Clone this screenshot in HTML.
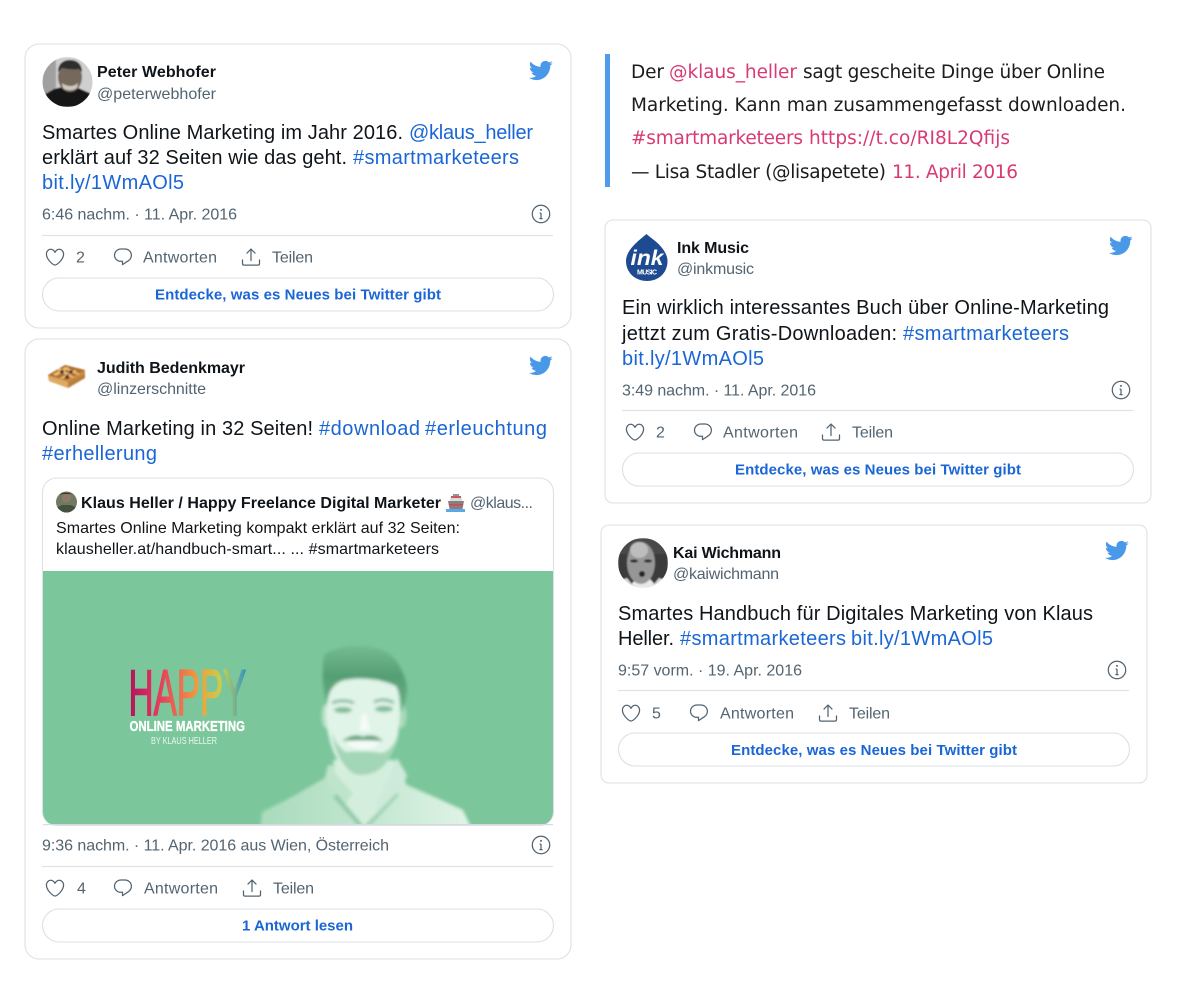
<!DOCTYPE html>
<html lang="de"><head><meta charset="utf-8"><title>Tweets</title>
<style>
html,body{margin:0;padding:0;background:#fff}
svg{display:block}
text{font-family:"Liberation Sans",sans-serif;white-space:pre}
.t{font-size:20px;fill:#0f1419}
.l{font-size:20px;fill:#1a66d6}
.n{font-size:16px;font-weight:700;fill:#0f1419}
.h{font-size:16px;fill:#536471}
.m{font-size:16px;fill:#536471}
.b{font-size:15px;font-weight:700;fill:#1a66d6}
.q{font-family:"DejaVu Sans",sans-serif;font-size:18.500px;fill:#1c1c1c}
.p{font-family:"DejaVu Sans",sans-serif;font-size:18.500px;fill:#d93a74}
.s{font-size:16px;fill:#0f1419}
.card{fill:#fff;stroke:#dbe1e6;stroke-width:1.100}
.div{stroke:#dde3e7;stroke-width:1.300}
.btn{fill:#fff;stroke:#d9e0e4;stroke-width:1.100}
.ic{fill:none;stroke:#536471;stroke-width:1.250;stroke-linejoin:round;stroke-linecap:round}
</style></head>
<body>
<svg xmlns="http://www.w3.org/2000/svg" width="1200" height="989" viewBox="0 0 1200 989">
<defs>
<symbol id="bird" viewBox="0 0 24 24"><path fill="#4a99e9" d="M23.643 4.937c-.835.37-1.732.62-2.675.733.962-.576 1.7-1.49 2.048-2.578-.9.534-1.897.922-2.958 1.13-.85-.904-2.06-1.47-3.4-1.47-2.572 0-4.658 2.086-4.658 4.66 0 .364.042.718.12 1.06-3.873-.195-7.304-2.05-9.602-4.868-.4.69-.63 1.49-.63 2.342 0 1.616.823 3.043 2.072 3.878-.764-.025-1.482-.234-2.11-.583v.06c0 2.257 1.605 4.14 3.737 4.568-.392.106-.803.162-1.227.162-.3 0-.593-.028-.877-.082.593 1.85 2.313 3.198 4.352 3.234-1.595 1.25-3.604 1.995-5.786 1.995-.376 0-.747-.022-1.112-.065 2.062 1.323 4.51 2.093 7.14 2.093 8.57 0 13.255-7.098 13.255-13.254 0-.2-.005-.402-.014-.602.91-.658 1.7-1.477 2.323-2.41z"/></symbol>
<symbol id="heart" viewBox="0 0 20 20"><path class="ic" d="M10 18C7.900 17.900 1.400 12.400 1.400 7c0-2.600 2-4.700 4.300-4.700 2 0 3.400 1.400 4.300 3 .9-1.600 2.300-3 4.300-3 2.300 0 4.300 2.100 4.300 4.700 0 5.400-6.500 10.900-8.600 11z"/></symbol>
<symbol id="reply" viewBox="0 0 20 20"><path class="ic" d="M8 2h3.900c3.600 0 6.500 2.800 6.500 6.300 0 2.700-1.500 4.600-3.700 5.900l-5.200 3.400v-3.300H8C4.400 14.300 1.500 11.600 1.500 8.200 1.500 4.800 4.400 2 8 2z"/></symbol>
<symbol id="share" viewBox="0 0 20 20"><path class="ic" d="M10 13.500V2.200M6 6.100L10 2l4 4.100M1.500 13v3.600c0 .9.700 1.500 1.500 1.500h14c.8 0 1.500-.6 1.500-1.500V13"/></symbol>
<symbol id="info" viewBox="0 0 20 20"><circle cx="10" cy="10" r="8.700" fill="none" stroke="#536471" stroke-width="1.250"/><circle cx="10" cy="5.900" r="1" fill="#536471"/><path d="M10 9v5.500M8.600 9.100H10M8.400 14.600h3.200" stroke="#536471" stroke-width="1.250" fill="none"/></symbol>
<clipPath id="ca1"><circle cx="67.500" cy="82" r="25"/></clipPath>
<clipPath id="ca2"><circle cx="643" cy="563" r="25"/></clipPath>
<clipPath id="ca3"><circle cx="66.500" cy="502" r="10.500"/></clipPath>
<clipPath id="img"><path d="M43 571H553V812a13 13 0 0 1-13 13H56a13 13 0 0 1-13-13z"/></clipPath>
<linearGradient id="rb" x1="0" x2="1" y1="0" y2="0">
<stop offset="0" stop-color="#b0125f"/><stop offset=".22" stop-color="#e2305f"/><stop offset=".42" stop-color="#ee6a50"/><stop offset=".6" stop-color="#f0a03a"/><stop offset=".8" stop-color="#c6d050"/><stop offset="1" stop-color="#2f93c4"/></linearGradient>
<linearGradient id="shirt" x1="0" x2="1" y1="0" y2="0"><stop offset="0" stop-color="#a9dbbc"/><stop offset=".55" stop-color="#c5e8d2"/><stop offset="1" stop-color="#e3f4e9"/></linearGradient>
<linearGradient id="hair" x1="0" x2="0" y1="0" y2="1"><stop offset="0" stop-color="#74bb92"/><stop offset=".45" stop-color="#569e74"/><stop offset="1" stop-color="#6bb48a"/></linearGradient>
<filter id="bl" x="-10%" y="-10%" width="120%" height="120%"><feGaussianBlur stdDeviation="1.500"/></filter>
<filter id="bs" x="-10%" y="-10%" width="120%" height="120%"><feGaussianBlur stdDeviation=".7"/></filter>
</defs>

<!-- Card 1 -->
<rect class="card" x="25" y="44" width="546" height="284" rx="14"/>
<g clip-path="url(#ca1)"><g filter="url(#bs)">
<rect x="42" y="57" width="52" height="50" fill="#cfcfcf"/>
<rect x="42" y="57" width="14" height="50" fill="#a0a0a0"/>
<path d="M42 107V96l12-7 8-2 14 0 18 8v12z" fill="#141414"/>
<ellipse cx="70" cy="77" rx="12" ry="15" fill="#75695c"/>
<path d="M58 72c0-8 5-12 12-12s12 4 12 12l-3-3c-6 1-12 0-17-1z" fill="#2e2e2e"/>
<path d="M62 83c5 4 12 4 16 0l-1 5c-4 3-11 3-14 0z" fill="#cfc8bf"/>
</g></g>
<text class="n" x="97" y="77" textLength="119">Peter Webhofer</text>
<text class="h" x="97" y="99" textLength="119">@peterwebhofer</text>
<use href="#bird" x="528" y="58" width="25" height="25"/>
<text class="t" x="42" y="139" textLength="361">Smartes Online Marketing im Jahr 2016.</text>
<text class="l" x="409" y="139" textLength="124">@klaus_heller</text>
<text class="t" x="42" y="164" textLength="305">erklärt auf 32 Seiten wie das geht.</text>
<text class="l" x="353" y="164" textLength="166">#smartmarketeers</text>
<text class="l" x="42" y="189" textLength="142">bit.ly/1WmAOl5</text>
<text class="m" x="42" y="219.500" textLength="195">6:46 nachm. · 11. Apr. 2016</text>
<use href="#info" x="531" y="204" width="20" height="20"/>
<line class="div" x1="42" x2="553" y1="235.500" y2="235.500"/>
<use href="#heart" x="45" y="247" width="20" height="20"/>
<text class="m" x="76" y="262.500">2</text>
<use href="#reply" x="113" y="247" width="20" height="20"/>
<text class="m" x="143" y="262.500" textLength="74">Antworten</text>
<use href="#share" x="241" y="247" width="20" height="20"/>
<text class="m" x="272" y="262.500" textLength="41">Teilen</text>
<rect class="btn" x="42.500" y="278" width="511" height="33" rx="16.500"/>
<text class="b" x="155" y="299.500" textLength="286">Entdecke, was es Neues bei Twitter gibt</text>

<!-- Card 2 -->
<rect class="card" x="25" y="339" width="546" height="620" rx="14"/>
<g filter="url(#bs)">
<path d="M48 375l17-10 20 5 0 8-17 10-19-7z" fill="#c98c45"/>
<path d="M48 375l17-10 20 5-18 10z" fill="#b0702f"/>
<path d="M53 374l14-7 2 1-13 8zM60 378l15-8 2 1-15 8zM57 370l15 8 2-1-14-9zM65 367l15 7-2 1-15-7z" fill="#e9bd72"/>
<circle cx="62" cy="372" r="1.800" fill="#4b2b3a"/><circle cx="71" cy="372" r="1.800" fill="#4b2b3a"/><circle cx="67" cy="377" r="1.800" fill="#4b2b3a"/>
<path d="M49 376l19 6 0 6-19-7z" fill="#dcaa65"/>
<path d="M68 382l17-8v4l-17 10z" fill="#b97f3e"/>
</g>
<text class="n" x="97" y="373" textLength="148">Judith Bedenkmayr</text>
<text class="h" x="97" y="394" textLength="109">@linzerschnitte</text>
<use href="#bird" x="528" y="353" width="25" height="25"/>
<text class="t" x="42" y="435" textLength="271">Online Marketing in 32 Seiten!</text>
<text class="l" x="319" y="435" textLength="101">#download</text>
<text class="l" x="425" y="435" textLength="122">#erleuchtung</text>
<text class="l" x="42" y="460" textLength="115">#erhellerung</text>

<rect class="card" x="42.500" y="478" width="511" height="347.500" rx="14"/>
<g clip-path="url(#ca3)"><rect x="56" y="491" width="21" height="22" fill="#6f7a60"/><circle cx="66.500" cy="498" r="4.500" fill="#8f7a68"/><path d="M56 513v-5l6-3h9l6 3v5z" fill="#46503f"/><path d="M60 495c1-3 10-3 13 0l-2-1h-9z" fill="#3c332a"/></g>
<text class="n" x="81" y="508" textLength="360">Klaus Heller / Happy Freelance Digital Marketer</text>
<g>
<rect x="453" y="494" width="6" height="2" fill="#8f98a0"/>
<rect x="451" y="496" width="10" height="2" fill="#c65a5a"/>
<rect x="450" y="498" width="12" height="3" fill="#d9dde0"/>
<path d="M448 501h16l-1.500 8h-13z" fill="#8a7f80"/>
<rect x="449" y="504" width="14" height="1.500" fill="#d8474a"/>
<rect x="446" y="509" width="19" height="3" fill="#5aa9e6"/>
</g>
<text class="h" x="470" y="508" textLength="63">@klaus...</text>
<text class="s" x="56" y="533" textLength="404">Smartes Online Marketing kompakt erklärt auf 32 Seiten:</text>
<text class="s" x="56" y="554" textLength="383">klausheller.at/handbuch-smart... ... #smartmarketeers</text>

<g clip-path="url(#img)">
<rect x="43" y="571" width="510" height="254" fill="#7bc69a"/>
<g transform="translate(128.500 715) scale(.535 1)"><text x="0" y="0" fill="url(#rb)" stroke="url(#rb)" stroke-width="1.500" style="font-size:65px">HAPPY</text></g>
<text x="129.500" y="731" style="font-size:15px;font-weight:700" fill="#fff" stroke="#fff" stroke-width=".35" textLength="115.500" lengthAdjust="spacingAndGlyphs">ONLINE MARKETING</text>
<text x="151" y="744" style="font-size:10px" fill="#eaf7ef" textLength="66" lengthAdjust="spacingAndGlyphs">BY KLAUS HELLER</text>
<g filter="url(#bl)">
<path d="M260 830l2-18 28-14 35-20 3-13 69 3 10 17 30 13 26 12 14 30z" fill="url(#shirt)"/>
<path d="M333 760h62l2 30-32 40-26-32z" fill="#d4eedd"/>
<path d="M328 765l25 28-8 12-20-27z" fill="#bfe4cc"/>
<path d="M397 758l10 17-6 18-20 22-6-8z" fill="#cdeada"/>
<path d="M337 794l26 31-4 2-26-30z" fill="#8fcba8"/>
<path d="M397 793l-32 32 4 2 30-32z" fill="#9ad2b1"/>
<ellipse cx="326" cy="716" rx="4.500" ry="12" fill="#b5e0c5"/>
<ellipse cx="402" cy="716" rx="4.500" ry="12" fill="#a8dabb"/>
<path d="M328 692c4-14 18-20 36-19 20 1 33 7 35 20 2 16 1 32-2 47-4 16-14 27-28 33-12 3-22 1-28-8-8-11-12-24-14-38-2-12-1-24 1-35z" fill="#e0f4e8"/>
<path d="M331 730c3 18 9 34 20 42 8 5 18 3 26-1 10-6 17-18 20-34-3 8-8 14-15 16-10 -2-26-2-36-1-7-4-12-12-15-22z" fill="#a3d6b6"/>
<path d="M324 655c10-7 24-10 40-9 18 2 30 8 36 21 4 8 7 15 7 24-1 9-3 16-6 22-1-14-2-22-5-27-14-7-38-10-55-5-10 5-13 13-14 25-3-14-6-25-3-51z" fill="url(#hair)"/>
<ellipse cx="343" cy="710" rx="9" ry="3" fill="#7fbb98"/>
<ellipse cx="384" cy="709" rx="9" ry="3" fill="#7fbb98"/>
<path d="M332 703c6-3 16-3 22 0M374 702c6-3 14-3 20 1" stroke="#63a57e" stroke-width="2.200" fill="none"/>
<path d="M342 741c8-6 16-7 21-4 6-3 14-2 20 4-12-1-28-1-41 0z" fill="#5fa27a"/>
<path d="M346 741h34c-4 7-10 8-17 8s-13-1-17-8z" fill="#f5fcf8"/>
<path d="M362 714c-1 7-2 13-3 17h11c-1-5-2-10-3-17z" fill="#f4fcf7"/>
</g>
</g>
<rect x="43" y="824" width="510" height="1.200" fill="#d6dde2"/>

<text class="m" x="42" y="850.500" textLength="347">9:36 nachm. · 11. Apr. 2016 aus Wien, Österreich</text>
<use href="#info" x="531" y="835" width="20" height="20"/>
<line class="div" x1="42" x2="553" y1="866.500" y2="866.500"/>
<use href="#heart" x="45" y="878" width="20" height="20"/>
<text class="m" x="77" y="893.500">4</text>
<use href="#reply" x="113" y="878" width="20" height="20"/>
<text class="m" x="144" y="893.500" textLength="74">Antworten</text>
<use href="#share" x="242" y="878" width="20" height="20"/>
<text class="m" x="273" y="893.500" textLength="41">Teilen</text>
<rect class="btn" x="42.500" y="909" width="511" height="33" rx="16.500"/>
<text class="b" x="242" y="930.500" textLength="111">1 Antwort lesen</text>

<!-- Quote -->
<rect x="605" y="54" width="5" height="133" fill="#4f9ceb"/>
<text class="q" x="631" y="78" textLength="33">Der</text>
<text class="p" x="669" y="78" textLength="128">@klaus_heller</text>
<text class="q" x="803" y="78" textLength="302">sagt gescheite Dinge über Online</text>
<text class="q" x="631" y="111" textLength="495">Marketing. Kann man zusammengefasst downloaden.</text>
<text class="p" x="631" y="144" textLength="172">#smartmarketeers</text>
<text class="p" x="809" y="144" textLength="201">https://t.co/RI8L2Qfijs</text>
<text class="q" x="631" y="178" textLength="255">— Lisa Stadler (@lisapetete)</text>
<text class="p" x="892" y="178" textLength="126">11. April 2016</text>

<!-- Card 3 -->
<rect class="card" x="605" y="220" width="546" height="283" rx="8"/>
<path d="M646.500 234c3 3 8 6 12 10 5 5 9 11 9 17 0 12-9 20-20.500 20S626 273 626 261c0-6 4-12 9-17 4-4 8-7 11.500-10z" fill="#1d4a91"/>
<text x="630.500" y="265" style="font-size:21px;font-weight:700;font-style:italic" fill="#fff" textLength="33" lengthAdjust="spacingAndGlyphs">ink</text>
<text x="637" y="274.500" style="font-size:7px;font-weight:700" fill="#fff" textLength="20">MUSIC</text>
<text class="n" x="677" y="253" textLength="72">Ink Music</text>
<text class="h" x="677" y="274" textLength="77">@inkmusic</text>
<use href="#bird" x="1108" y="233" width="25" height="25"/>
<text class="t" x="622" y="314" textLength="487">Ein wirklich interessantes Buch über Online-Marketing</text>
<text class="t" x="622" y="340" textLength="275">jettzt zum Gratis-Downloaden:</text>
<text class="l" x="903" y="340" textLength="166">#smartmarketeers</text>
<text class="l" x="622" y="365" textLength="142">bit.ly/1WmAOl5</text>
<text class="m" x="622" y="395.500" textLength="194">3:49 nachm. · 11. Apr. 2016</text>
<use href="#info" x="1111" y="380" width="20" height="20"/>
<line class="div" x1="622" x2="1133" y1="410.500" y2="410.500"/>
<use href="#heart" x="625" y="422" width="20" height="20"/>
<text class="m" x="656" y="437.500">2</text>
<use href="#reply" x="693" y="422" width="20" height="20"/>
<text class="m" x="723" y="437.500" textLength="75">Antworten</text>
<use href="#share" x="821" y="422" width="20" height="20"/>
<text class="m" x="852" y="437.500" textLength="41">Teilen</text>
<rect class="btn" x="622.500" y="453" width="511" height="33" rx="16.500"/>
<text class="b" x="735" y="474.500" textLength="286">Entdecke, was es Neues bei Twitter gibt</text>

<!-- Card 4 -->
<rect class="card" x="601" y="525" width="546" height="258" rx="8"/>
<g clip-path="url(#ca2)"><g filter="url(#bs)">
<rect x="618" y="538" width="50" height="50" fill="#3a3a3a"/>
<rect x="618" y="538" width="50" height="16" fill="#4a4a4a"/>
<path d="M628 588l8-9h14l8 9z" fill="#e8e8e8"/>
<path d="M618 588v-7l9-3 8 10zM668 588v-7l-9-3-8 10z" fill="#d8d8d8"/>
<ellipse cx="641" cy="563" rx="14" ry="21" fill="#969696"/>
<ellipse cx="639" cy="550" rx="9" ry="8" fill="#bdbdbd"/>
<ellipse cx="634" cy="561" rx="4" ry="1.600" fill="#333"/><ellipse cx="648" cy="561" rx="4" ry="1.600" fill="#333"/>
<ellipse cx="642" cy="574" rx="3" ry="3" fill="#262626"/>
</g></g>
<text class="n" x="673" y="558" textLength="108">Kai Wichmann</text>
<text class="h" x="673" y="579" textLength="106">@kaiwichmann</text>
<use href="#bird" x="1104" y="538" width="25" height="25"/>
<text class="t" x="618" y="620" textLength="475">Smartes Handbuch für Digitales Marketing von Klaus</text>
<text class="t" x="618" y="645" textLength="56">Heller.</text>
<text class="l" x="680" y="645" textLength="166">#smartmarketeers</text>
<text class="l" x="851" y="645" textLength="142">bit.ly/1WmAOl5</text>
<text class="m" x="618" y="675.500" textLength="184">9:57 vorm. · 19. Apr. 2016</text>
<use href="#info" x="1107" y="660" width="20" height="20"/>
<line class="div" x1="618" x2="1129" y1="690.500" y2="690.500"/>
<use href="#heart" x="621" y="703" width="20" height="20"/>
<text class="m" x="652" y="718.500">5</text>
<use href="#reply" x="689" y="703" width="20" height="20"/>
<text class="m" x="720" y="718.500" textLength="74">Antworten</text>
<use href="#share" x="818" y="703" width="20" height="20"/>
<text class="m" x="849" y="718.500" textLength="41">Teilen</text>
<rect class="btn" x="618.500" y="733" width="511" height="33" rx="16.500"/>
<text class="b" x="731" y="755" textLength="286">Entdecke, was es Neues bei Twitter gibt</text>
</svg>
</body></html>
